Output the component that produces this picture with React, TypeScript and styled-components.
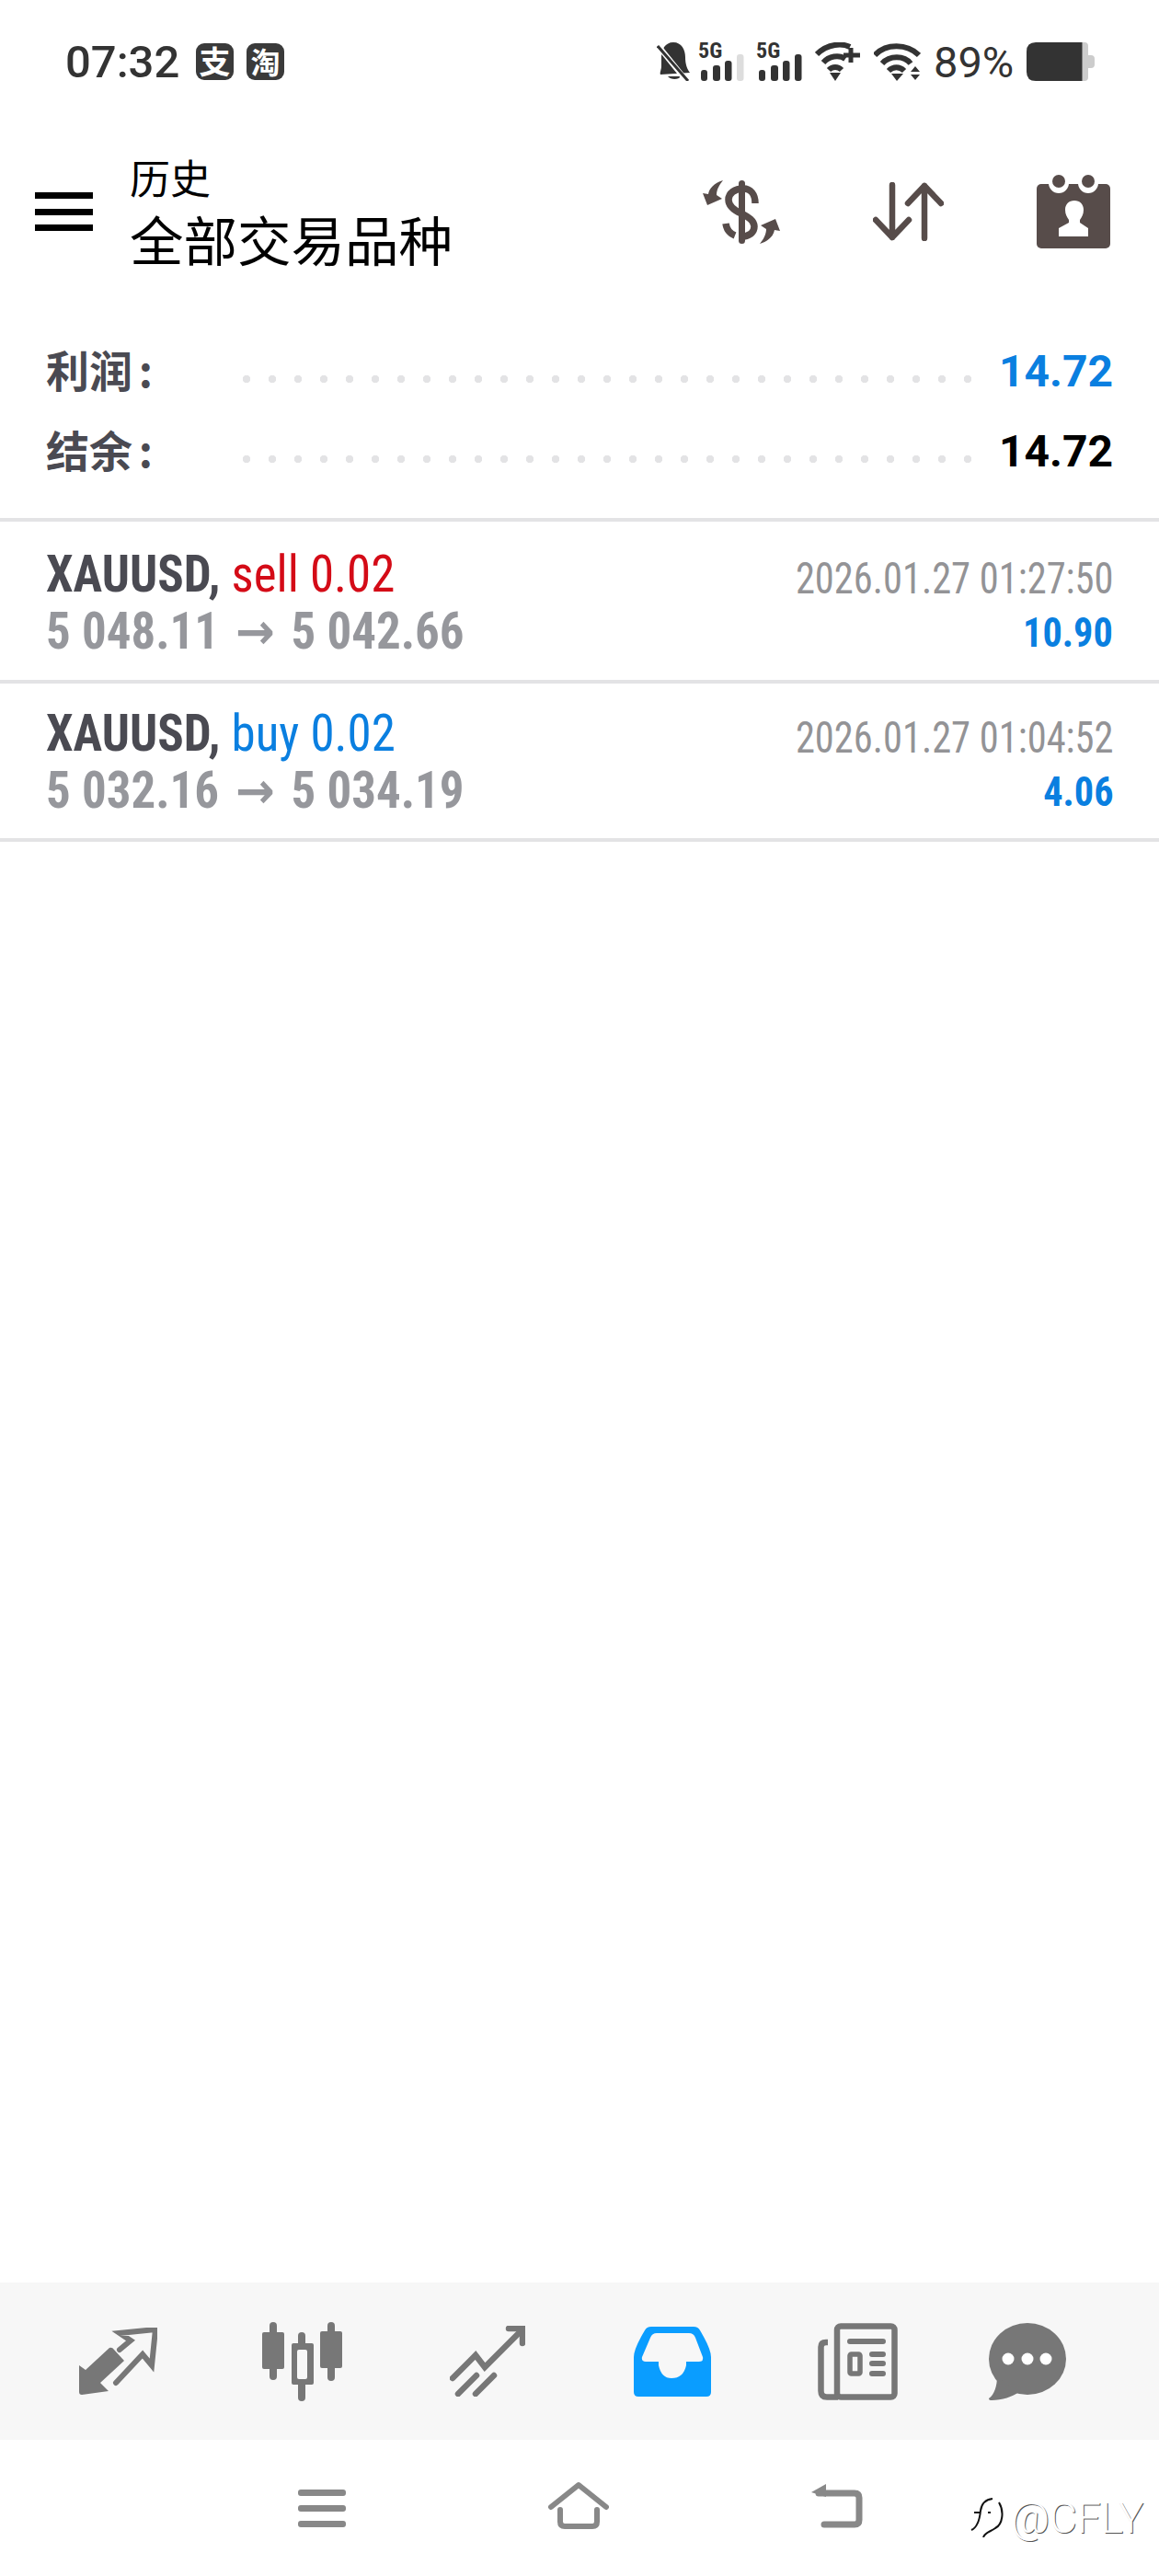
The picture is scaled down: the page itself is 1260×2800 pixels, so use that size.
import { createGlobalStyle } from 'styled-components';
import styled from 'styled-components';

const GlobalStyle = createGlobalStyle`
    html, body {
        margin: 0;
        padding: 0;
        background: #ffffff;
    }
`;

const CJK = `"Noto Sans CJK SC", "Noto Sans", sans-serif`;
const NARROW = `"Roboto Condensed", "Liberation Sans Narrow", Roboto, sans-serif`;

const Page = styled.div`
    width: 1260px;
    height: 2800px;
    display: flex;
    flex-direction: column;
    background: #fff;
    font-family: Roboto, ${CJK};
`;

/* 状态栏 */
const StatusBar = styled.div`
    height: 134px;
    padding: 0 70px 0 71px;
    display: flex;
    align-items: center;
    color: #333;
`;

const Clock = styled.span`
    font-size: 49px;
    font-weight: 500;
    line-height: 1;
    width: 142px;
`;

const AppBadge = styled.span<{ $size: number }>`
    width: 41px;
    height: 40px;
    margin-right: 14px;
    border-radius: 9px;
    background: #3a3a3a;
    color: #fff;
    font-family: ${CJK};
    font-weight: 700;
    font-size: ${(p) => p.$size}px;
    line-height: 38px;
    text-align: center;
`;

const StatusRight = styled.div`
    margin-left: auto;
    display: flex;
    align-items: center;
`;

const Signal = styled.div<{ $gap: number }>`
    position: relative;
    width: 47px;
    height: 42px;
    margin-left: ${(p) => p.$gap}px;
`;

const SignalLabel = styled.span`
    position: absolute;
    left: -3px;
    top: -2px;
    font-family: ${NARROW};
    font-weight: 700;
    font-size: 24px;
    line-height: 22px;
`;

const Battery = styled.div`
    width: 74px;
    height: 42px;
    margin-left: 13px;
`;

const Percent = styled.span`
    width: 88px;
    margin-left: 14px;
    font-size: 47px;
    line-height: 1;
`;

/* 顶部标题 */
const Header = styled.header`
    height: 192px;
    padding: 0 53px 0 38px;
    display: flex;
    align-items: center;
`;

const TitleBlock = styled.div`
    margin-left: 40px;
    display: flex;
    flex-direction: column;
    color: #000;
    font-family: ${CJK};
`;

const SubTitle = styled.div`
    font-size: 44px;
    line-height: 58px;
`;

const Title = styled.div`
    font-size: 58.5px;
    line-height: 76px;
`;

const HeaderActions = styled.div`
    margin-left: auto;
    display: flex;
    align-items: center;
    gap: 101px;
`;

/* 汇总 */
const Summary = styled.section`
    padding: 34px 50px 0;
    height: 241px;
    box-sizing: border-box;
    border-bottom: 4px solid #e3e3e5;
    display: flex;
    flex-direction: column;
`;

const SummaryRow = styled.div`
    height: 87px;
    display: flex;
    align-items: center;
`;

const SummaryLabel = styled.span`
    width: 214px;
    padding-bottom: 6px;
    font-family: ${CJK};
    font-weight: 700;
    font-size: 47px;
    word-spacing: -4px;
    color: #4a4a52;
`;

const Dots = styled.span`
    flex: 1;
    height: 8px;
    margin-top: 16px;
    background-image: radial-gradient(circle at 4px 4px, #e3e3e5 4px, transparent 4.5px);
    background-size: 28px 8px;
    background-repeat: repeat-x;
`;

const SummaryValue = styled.span<{ $color: string }>`
    width: 154px;
    text-align: right;
    font-weight: 700;
    font-size: 48px;
    color: ${(p) => p.$color};
`;

/* 交易记录 */
const DealRow = styled.div<{ $first?: boolean }>`
    height: ${(p) => (p.$first ? 176 : 172)}px;
    padding: ${(p) => (p.$first ? 26 : 23)}px 50px 0;
    box-sizing: border-box;
    border-bottom: 4px solid #e3e3e5;
    display: flex;
    justify-content: space-between;
`;

const Column = styled.div`
    display: flex;
    flex-direction: column;
`;

const RightColumn = styled(Column)`
    align-items: flex-end;
    padding-top: 7px;
`;

const DealLine = styled.div`
    font-family: ${NARROW};
    font-size: 56px;
    line-height: 62px;
    white-space: nowrap;
    transform: scaleX(0.945);
    transform-origin: left center;
`;

const Symbol = styled.span`
    font-weight: 700;
    color: #4a4a52;
`;

const Side = styled.span<{ $color: string }>`
    color: ${(p) => p.$color};
`;

const Prices = styled.span`
    font-weight: 700;
    color: #96979c;
`;

const Arrow = styled.span`
    margin: 0 6px;
    font-family: "DejaVu Sans", sans-serif;
    font-size: 54px;
    font-weight: 700;
`;

const DealTime = styled.div`
    font-family: ${NARROW};
    font-size: 48px;
    line-height: 58px;
    color: #939396;
    white-space: nowrap;
    transform: scaleX(0.885);
    transform-origin: right center;
`;

const DealProfit = styled.div`
    font-family: ${NARROW};
    font-weight: 700;
    font-size: 44px;
    line-height: 60px;
    color: #0a7fe0;
    transform: scaleX(0.96);
    transform-origin: right center;
`;

const Spacer = styled.div`
    flex: 1;
`;

/* 底部标签 */
const TabBar = styled.nav`
    height: 171px;
    padding-left: 28px;
    background: #f7f7f7;
    display: grid;
    grid-template-columns: 200px 200px 204px 198px 204px 166px;
    justify-items: center;
    align-items: center;
`;

const SystemNav = styled.div`
    position: relative;
    height: 148px;
    padding-left: 324px;
    display: flex;
    align-items: center;
    gap: 220px;
`;

const Watermark = styled.div`
    position: absolute;
    left: 1055px;
    top: 62px;
    display: flex;
    align-items: flex-start;
    gap: 6px;
`;

const WatermarkText = styled.span`
    font-family: Roboto, sans-serif;
    font-weight: 300;
    font-size: 46px;
    line-height: 46px;
    color: #fff;
    text-shadow: 1px 1px 0 #555;
`;

const BROWN = '#574c4a';
const TAB = '#777777';

function MenuIcon() {
    return (
        <svg width="63" height="42" viewBox="0 0 63 42">
            <rect y="0" width="63" height="7" />
            <rect y="18" width="63" height="7" />
            <rect y="35" width="63" height="7" />
        </svg>
    );
}

function CurrencyIcon() {
    const arrow = 'M22 0C12 3 7 9 6 15L0 14L5 27L21 20L15 16C15 10 18 5 22 0Z';
    return (
        <svg width="84" height="69" viewBox="0 0 84 69" fill={BROWN}>
            <path
                d="M57 25C57 15 52 9 44 9C35 9 28 14 28 21C28 29 35 33 42 36C50 40 56 44 56 50C56 57 50 61 42 61"
                fill="none"
                stroke={BROWN}
                strokeWidth="7.5"
            />
            <path d="M25 47C26 54 30 58 35 60" fill="none" stroke={BROWN} strokeWidth="7.5" />
            <rect x="39" width="7" height="69" rx="3.5" />
            <path d={arrow} />
            <path d={arrow} transform="rotate(180 42 34.5)" />
        </svg>
    );
}

function SortIcon() {
    return (
        <svg width="77" height="64" viewBox="0 0 77 64" fill="none" stroke={BROWN} strokeWidth="6.5" strokeLinecap="round" strokeLinejoin="round">
            <path d="M21 3V60M3 41L21 60L39 41" />
            <path d="M56 61V4M38 23L56 4L74 23" />
        </svg>
    );
}

function CalendarIcon() {
    return (
        <svg width="80" height="80" viewBox="0 0 80 80" fill={BROWN}>
            <rect y="10" width="80" height="70" rx="5" />
            <ellipse cx="24" cy="9" rx="11" ry="11" fill="#fff" />
            <ellipse cx="56" cy="9" rx="11" ry="11" fill="#fff" />
            <ellipse cx="24" cy="7" rx="7" ry="7" />
            <ellipse cx="56" cy="7" rx="7" ry="7" />
            <path
                d="M41 28C47 28 51 32 51 38C51 43 49 46 47 49V52L56 58V67H24V58L35 52V49C33 46 31 43 31 38C31 32 35 28 41 28Z"
                fill="#fff"
            />
        </svg>
    );
}

function BellOffIcon() {
    return (
        <svg width="36" height="42" viewBox="0 0 36 42" fill="#333">
            <path d="M18 0C27 0 31 8 31 16C31 24 33 29 36 33L4 35C3 33 5 30 5 26V16C5 8 9 0 18 0Z" />
            <path d="M12 37H26C24 41 15 41 12 37Z" />
            <path d="M0 2L34 44" stroke="#fff" strokeWidth="6" />
            <path d="M1 4L34 42" stroke="#333" strokeWidth="3" />
        </svg>
    );
}

function SignalBars({ last }: { last: string }) {
    return (
        <svg width="47" height="29" viewBox="0 0 47 29" fill="#333" style={{ position: 'absolute', left: 0, bottom: 0 }}>
            <rect y="17" width="7" height="12" rx="3" />
            <rect x="13" y="12" width="8" height="17" rx="3" />
            <rect x="26" y="7" width="7.5" height="22" rx="3" />
            <rect x="39" width="7.5" height="29" rx="3" fill={last} />
        </svg>
    );
}

function WifiPlusIcon() {
    return (
        <svg width="49" height="42" viewBox="0 0 49 42" fill="none" stroke="#333" strokeWidth="6" style={{ marginLeft: 14 }}>
            <path d="M2 13C14 1 30 1 38 5" />
            <path d="M9 22C15 15 26 13 33 18" />
            <path d="M15 30C19 26 25 26 29 30" />
            <path d="M16 33H28L22 42Z" fill="#333" stroke="none" />
            <path d="M39 6V22M31 14H49" strokeWidth="5" />
        </svg>
    );
}

function WifiIcon() {
    return (
        <svg width="51" height="42" viewBox="0 0 51 42" fill="none" stroke="#333" strokeWidth="6" style={{ marginLeft: 15 }}>
            <path d="M1 14C13 1 36 1 49 14" />
            <path d="M9 23C17 14 33 14 40 23" />
            <path d="M16 31C21 26 28 26 33 31" />
            <path d="M19 34H32L25 42Z" fill="#333" stroke="none" />
            <path d="M40 32L45 26L50 32ZM40 35H50L45 41Z" fill="#333" stroke="none" />
        </svg>
    );
}

function BatteryIcon() {
    return (
        <svg width="74" height="42" viewBox="0 0 74 42">
            <path d="M60 0H63Q67 0 67 4V14H70Q74 14 74 18V24Q74 28 70 28H67V38Q67 42 63 42H60Z" fill="#cccccc" />
            <path d="M10 0H60.500V42H10Q0 42 0 32V10Q0 0 10 0Z" fill="#333" />
        </svg>
    );
}

function TradeIcon() {
    return (
        <svg width="85" height="73" viewBox="0 0 85 73" fill={TAB}>
            <path d="M0 41L7 46L33 22Q36 21 38 24L49 36L23 60L32 69L3 73Q0 73 0 70Z" />
            <path d="M44 24L56 14L44 6L83 2L79 41L69 29L40 60" fill="none" stroke={TAB} strokeWidth="6" strokeLinejoin="miter" strokeLinecap="round" />
        </svg>
    );
}

function ChartIcon() {
    return (
        <svg width="89" height="86" viewBox="0 0 89 86" fill={TAB}>
            <rect x="9" width="8" height="63" rx="4" />
            <rect x="1" y="11" width="24" height="40" rx="2" />
            <rect x="40" y="11" width="8" height="75" rx="4" />
            <rect x="33" y="23" width="24" height="45" rx="2" />
            <rect x="39" y="30" width="11" height="32" rx="2" fill="#f7f7f7" />
            <rect x="72" width="8" height="64" rx="4" />
            <rect x="64" y="10" width="24" height="40" rx="2" />
        </svg>
    );
}

function SignalsIcon() {
    return (
        <svg width="82" height="77" viewBox="0 0 82 77" fill="none" stroke={TAB} strokeWidth="6.500" strokeLinecap="round">
            <path d="M3 57L28 32L38 45L78 5" />
            <path d="M64 3H79V19" />
            <path d="M9 74L29 54M28 74L48 54" />
        </svg>
    );
}

function InboxIcon() {
    return (
        <svg width="84" height="76" viewBox="0 0 84 76">
            <path
                fillRule="evenodd"
                fill="#0a9dff"
                d="M19 0H65Q70 0 72 4Q84 24 84 33V71Q84 76 79 76H5Q0 76 0 71V33Q0 24 12 4Q14 0 19 0ZM25 7Q20 7 18 12L9 33Q8 38 13 38H27V42Q30 56 41 56Q54 56 57 42V38H71Q76 38 75 33L67 12Q65 7 60 7Z"
            />
        </svg>
    );
}

function NewsIcon() {
    return (
        <svg width="87" height="84" viewBox="0 0 87 84" fill="none" stroke={TAB} strokeWidth="6.500">
            <rect x="21" y="3.500" width="62.500" height="77" rx="4" />
            <path d="M11 21H9Q3.500 21 3.500 26V74Q3.500 80.500 10 80.500H22" />
            <path d="M35 20H71M59 34H71M59 44H71M59 55H71" strokeWidth="6" strokeLinecap="round" />
            <rect x="35" y="34" width="11" height="21" rx="1.500" strokeWidth="5.500" />
        </svg>
    );
}

function ChatIcon() {
    return (
        <svg width="84" height="84" viewBox="0 0 84 84" fill={TAB}>
            <ellipse cx="42" cy="39" rx="42" ry="39" />
            <path d="M9 58C9 68 6 78 0 82Q0 84 3 84C14 84 26 80 33 75Z" />
            <circle cx="21" cy="39" r="6.500" fill="#fff" />
            <circle cx="42" cy="39" r="6.500" fill="#fff" />
            <circle cx="62" cy="39" r="6.500" fill="#fff" />
        </svg>
    );
}

function NavMenuIcon() {
    return (
        <svg width="52" height="41" viewBox="0 0 52 41" fill="#888">
            <rect width="52" height="7" rx="3" />
            <rect y="17" width="52" height="7" rx="3" />
            <rect y="34" width="52" height="7" rx="3" />
        </svg>
    );
}

function NavHomeIcon() {
    return (
        <svg width="66" height="53" viewBox="0 0 66 53" fill="none" stroke="#888" strokeWidth="6" strokeLinecap="round" strokeLinejoin="round" style={{ marginTop: -5 }}>
            <path d="M3 28L33 4L63 28" />
            <path d="M13 31V44Q13 49 18 49H48Q53 49 53 44V31" />
        </svg>
    );
}

function NavBackIcon() {
    return (
        <svg width="56" height="48" viewBox="0 0 56 48" fill="none" stroke="#888" strokeWidth="7" strokeLinecap="round" strokeLinejoin="round" style={{ marginTop: -4 }}>
            <path d="M8 10H47Q52 10 52 15V39Q52 44 47 44H14" />
            <path d="M0 9L16 0V14Z" fill="#888" stroke="none" />
        </svg>
    );
}

function WatermarkLogo() {
    return (
        <svg width="38" height="44" viewBox="0 0 38 44" fill="none" stroke="#111" strokeWidth="2">
            <path d="M24 2C15 3 12 8 11 15C10 25 8 33 1 36" />
            <path d="M31 6C37 16 35 30 27 34C22 38 16 38 14 44" />
            <path d="M4 17H10M19 17H22" />
        </svg>
    );
}

function App() {
    return (
        <Page>
            <GlobalStyle />
            <StatusBar>
                <Clock>07:32</Clock>
                <AppBadge $size={34}>支</AppBadge>
                <AppBadge $size={32}>淘</AppBadge>
                <StatusRight>
                    <BellOffIcon />
                    <Signal $gap={12}>
                        <SignalLabel>5G</SignalLabel>
                        <SignalBars last="#dddddd" />
                    </Signal>
                    <Signal $gap={16}>
                        <SignalLabel>5G</SignalLabel>
                        <SignalBars last="#333" />
                    </Signal>
                    <WifiPlusIcon />
                    <WifiIcon />
                    <Percent>89%</Percent>
                    <Battery>
                        <BatteryIcon />
                    </Battery>
                </StatusRight>
            </StatusBar>

            <Header>
                <MenuIcon />
                <TitleBlock>
                    <SubTitle>历史</SubTitle>
                    <Title>全部交易品种</Title>
                </TitleBlock>
                <HeaderActions>
                    <CurrencyIcon />
                    <SortIcon />
                    <CalendarIcon />
                </HeaderActions>
            </Header>

            <Summary>
                <SummaryRow>
                    <SummaryLabel>利润 :</SummaryLabel>
                    <Dots />
                    <SummaryValue $color="#0a7fe0">14.72</SummaryValue>
                </SummaryRow>
                <SummaryRow>
                    <SummaryLabel>结余 :</SummaryLabel>
                    <Dots />
                    <SummaryValue $color="#000">14.72</SummaryValue>
                </SummaryRow>
            </Summary>

            <DealRow $first>
                <Column>
                    <DealLine>
                        <Symbol>XAUUSD,</Symbol> <Side $color="#d40b17">sell 0.02</Side>
                    </DealLine>
                    <DealLine>
                        <Prices>5 048.11 <Arrow>→</Arrow> 5 042.66</Prices>
                    </DealLine>
                </Column>
                <RightColumn>
                    <DealTime>2026.01.27 01:27:50</DealTime>
                    <DealProfit>10.90</DealProfit>
                </RightColumn>
            </DealRow>
            <DealRow>
                <Column>
                    <DealLine>
                        <Symbol>XAUUSD,</Symbol> <Side $color="#0a7fe0">buy 0.02</Side>
                    </DealLine>
                    <DealLine>
                        <Prices>5 032.16 <Arrow>→</Arrow> 5 034.19</Prices>
                    </DealLine>
                </Column>
                <RightColumn>
                    <DealTime>2026.01.27 01:04:52</DealTime>
                    <DealProfit>4.06</DealProfit>
                </RightColumn>
            </DealRow>

            <Spacer />

            <TabBar>
                <TradeIcon />
                <ChartIcon />
                <SignalsIcon />
                <InboxIcon />
                <NewsIcon />
                <ChatIcon />
            </TabBar>
            <SystemNav>
                <NavMenuIcon />
                <NavHomeIcon />
                <NavBackIcon />
                <Watermark>
                    <WatermarkLogo />
                    <WatermarkText>@CFLY</WatermarkText>
                </Watermark>
            </SystemNav>
        </Page>
    );
}

export default App;
